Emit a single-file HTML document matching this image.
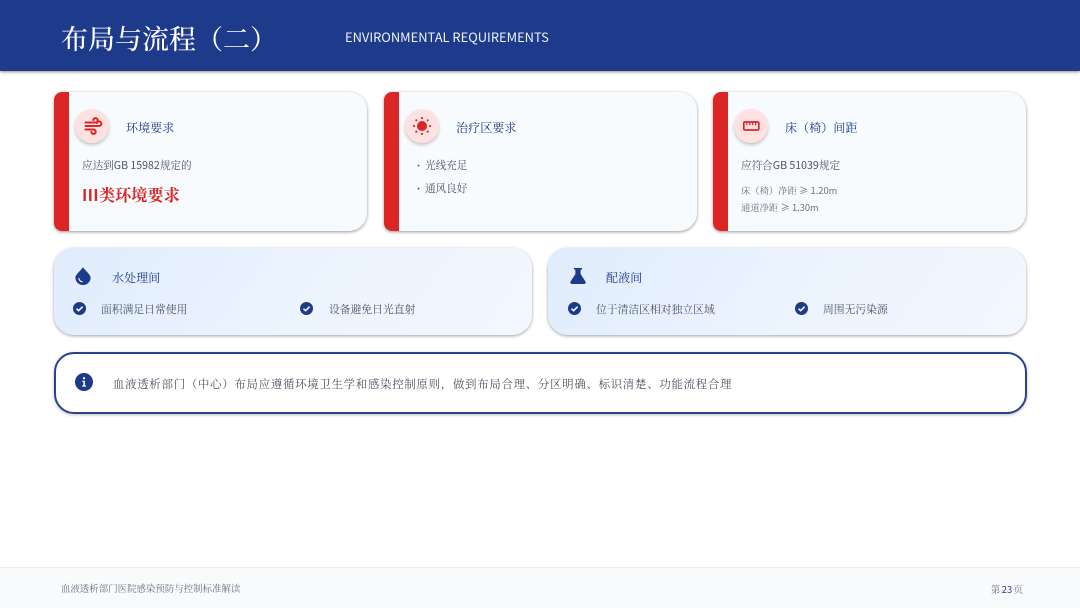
<!DOCTYPE html>
<html lang="zh"><head><meta charset="utf-8"><title>布局与流程（二）</title>
<style>
html,body{margin:0;padding:0}
body{width:1080px;height:608px;position:relative;overflow:hidden;background:#fff;font-family:"Noto Serif CJK SC","Liberation Serif",serif;color:#4b5563}
.t{position:absolute;white-space:nowrap;line-height:20px;height:20px}
.s{font-family:"Noto Sans CJK SC","Liberation Sans",sans-serif}
.hd{position:absolute;left:0;top:0;width:1080px;height:71px;background:#1e3a8a;box-shadow:0 1px 3px rgba(0,0,0,.45)}
.card{position:absolute;top:92px;width:313px;height:139px;background:#f8fbfd;border-radius:8px 18px 18px 8px;box-shadow:0 1px 3px rgba(0,0,0,.42);overflow:hidden}
.bar{position:absolute;left:0;top:0;width:15px;height:139px;background:#dc2626}
.ic{position:absolute;top:109px;width:34px;height:34px;border-radius:50%;background:#fee2e2;box-shadow:0 2px 3px rgba(0,0,0,.22)}
.ic svg{position:absolute;left:0;top:0}
.panel{position:absolute;top:248px;width:478px;height:87px;border-radius:20px;background:linear-gradient(125deg,#e0ecfd 0%,#ecf4fe 55%,#f3f7fe 100%);box-shadow:0 1px 3px rgba(0,0,0,.38)}
.h{font-size:12px;color:#1e3a8a;letter-spacing:.1px}
.b{font-size:10.6px;color:#4b5563}
.r{font-size:10.8px;color:#4b5563}
.info{position:absolute;left:54px;top:352px;width:969px;height:58px;border:2px solid #29448c;border-radius:20px;background:#fff;box-shadow:0 1px 3px rgba(0,0,0,.25)}
.ft{position:absolute;left:0;top:567px;width:1080px;height:41px;background:#f8fafc;border-top:1px solid #e8ecf0;box-sizing:border-box}
svg{position:absolute;overflow:visible}
</style></head><body>
<div class="hd"></div>
<div class="t" style="left:61px;top:23px;font-size:27px;line-height:30px;height:30px;color:#fff;font-weight:500">布局与流程（二）</div>
<div class="t s" style="left:345px;top:27px;font-size:12.9px;color:#eef1f9;font-weight:400">ENVIRONMENTAL REQUIREMENTS</div>

<div class="card" style="left:54px"><div class="bar"></div></div>
<div class="card" style="left:384px"><div class="bar"></div></div>
<div class="card" style="left:713px"><div class="bar"></div></div>

<div class="ic" style="left:75px"><svg width="34" height="34" viewBox="0 0 34 34" fill="none" stroke="#dc2626" stroke-width="2" stroke-linecap="round"><path d="M10.5 13.5H20.5a2.2 2.2 0 1 0-2.2-2.4"/><path d="M10.5 17H24a2.3 2.3 0 1 0-2.2-3"/><path d="M10.5 20.5H18.5a2.2 2.2 0 1 1-2.2 2.4"/></svg></div>
<div class="ic" style="left:405px"><svg width="34" height="34" viewBox="0 0 34 34" fill="#dc2626"><circle cx="17" cy="17" r="5"/><circle cx="17" cy="9" r="1.1"/><circle cx="17" cy="25" r="1.1"/><circle cx="9" cy="17" r="1.1"/><circle cx="25" cy="17" r="1.1"/><circle cx="11.3" cy="11.3" r="1.1"/><circle cx="22.7" cy="11.3" r="1.1"/><circle cx="11.3" cy="22.7" r="1.1"/><circle cx="22.7" cy="22.7" r="1.1"/></svg></div>
<div class="ic" style="left:734px"><svg width="34" height="34" viewBox="0 0 34 34" fill="none" stroke="#dc2626" stroke-width="1.7"><rect x="9.8" y="13" width="15" height="8" rx="1.2"/><path d="M12.9 13v3.2M15.8 13v3.2M18.7 13v3.2M21.6 13v3.2" stroke-width="1.2"/></svg></div>

<div class="t h" style="left:126px;top:118px">环境要求</div>
<div class="t h" style="left:456px;top:118px">治疗区要求</div>
<div class="t h" style="left:785px;top:118px">床（椅）间距</div>

<div class="t b" style="left:82px;top:156px">应达到<span class="s">GB 15982</span>规定的</div>
<div class="t" style="left:82px;top:184px;font-size:16.2px;font-weight:700;color:#dc2626"><span class="s" style="font-weight:700;letter-spacing:.3px">III</span>类环境要求</div>

<div class="t b" style="left:414px;top:156px"><span class="s" style="position:absolute;left:0;font-size:9px">•</span><span style="margin-left:11px">光线充足</span></div>
<div class="t b" style="left:414px;top:179px"><span class="s" style="position:absolute;left:0;font-size:9px">•</span><span style="margin-left:11px">通风良好</span></div>

<div class="t b" style="left:741px;top:156px">应符合<span class="s">GB 51039</span>规定</div>
<div class="t" style="left:741px;top:180px;font-size:9.3px;color:#6b7280">床（椅）净距 <span class="s">≥ 1.20m</span></div>
<div class="t" style="left:741px;top:197px;font-size:9.3px;color:#6b7280">通道净距 <span class="s">≥ 1.30m</span></div>

<div class="panel" style="left:54px"></div>
<div class="panel" style="left:548px"></div>

<svg style="left:75px;top:267px" width="16" height="18" viewBox="0 0 16 18"><path d="M8 0C9 2.6 15.6 7.3 15.6 10.6A7.6 7.4 0 0 1 .4 10.6C.4 7.3 7 2.6 8 0Z" fill="#1e3a8a"/><path d="M4 11.6C4.2 13.4 5.4 14.5 7.2 14.7" fill="none" stroke="#fff" stroke-width="1.1" stroke-linecap="round"/></svg>
<svg style="left:570px;top:268px" width="16" height="16" viewBox="0 0 16 16"><path d="M4 0H12V1.6H10.6V6L15.5 13.6A1.6 1.6 0 0 1 14.1 16H1.9A1.6 1.6 0 0 1 .5 13.6L5.4 6V1.6H4Z" fill="#1e3a8a"/></svg>

<div class="t h" style="left:112px;top:268px">水处理间</div>
<div class="t h" style="left:606px;top:268px">配液间</div>

<svg style="left:73px;top:301.5px" width="13" height="13" viewBox="0 0 13 13"><circle cx="6.5" cy="6.5" r="6.5" fill="#1e3a8a"/><path d="M3.5 6.7L5.6 8.7L9.6 4.7" fill="none" stroke="#fff" stroke-width="1.5"/></svg>
<svg style="left:300px;top:301.5px" width="13" height="13" viewBox="0 0 13 13"><circle cx="6.5" cy="6.5" r="6.5" fill="#1e3a8a"/><path d="M3.5 6.7L5.6 8.7L9.6 4.7" fill="none" stroke="#fff" stroke-width="1.5"/></svg>
<svg style="left:568px;top:301.5px" width="13" height="13" viewBox="0 0 13 13"><circle cx="6.5" cy="6.5" r="6.5" fill="#1e3a8a"/><path d="M3.5 6.7L5.6 8.7L9.6 4.7" fill="none" stroke="#fff" stroke-width="1.5"/></svg>
<svg style="left:795px;top:301.5px" width="13" height="13" viewBox="0 0 13 13"><circle cx="6.5" cy="6.5" r="6.5" fill="#1e3a8a"/><path d="M3.5 6.7L5.6 8.7L9.6 4.7" fill="none" stroke="#fff" stroke-width="1.5"/></svg>

<div class="t r" style="left:101px;top:300px">面积满足日常使用</div>
<div class="t r" style="left:329px;top:300px">设备避免日光直射</div>
<div class="t r" style="left:596px;top:300px">位于清洁区相对独立区域</div>
<div class="t r" style="left:823px;top:300px">周围无污染源</div>

<div class="info"></div>
<svg style="left:75px;top:373px" width="18" height="18" viewBox="0 0 18 18"><circle cx="9" cy="9" r="9" fill="#1e3a8a"/><circle cx="9" cy="5.3" r="1.2" fill="#fff"/><path d="M7.4 7.8H9.9V12.4H11V13.6H7.2V12.4H8.4V9H7.4Z" fill="#fff"/></svg>
<div class="t" style="left:113px;top:374px;font-size:11.4px;letter-spacing:.75px;color:#4b5563">血液透析部门（中心）布局应遵循环境卫生学和感染控制原则，做到布局合理、分区明确、标识清楚、功能流程合理</div>

<div class="ft"></div>
<div class="t" style="left:61px;top:578px;font-size:9.45px;color:#6b7280">血液透析部门医院感染预防与控制标准解读</div>
<div class="t" style="left:991px;top:579px;font-size:9.4px;color:#6b7280;word-spacing:-1px">第 <span class="s" style="color:#1e3a8a">23</span> 页</div>
</body></html>
